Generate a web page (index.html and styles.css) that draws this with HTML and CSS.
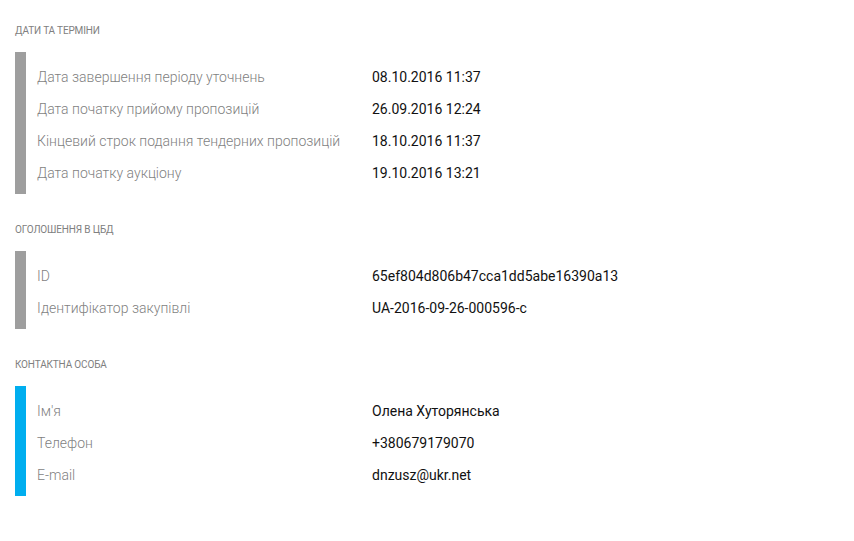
FILE: index.html
```html
<!DOCTYPE html>
<html lang="uk">
<head>
<meta charset="utf-8">
<link rel="stylesheet" href="styles.css">
</head>
<body>
<div class="page">
  <section class="block">
    <h3 class="title">Дати та терміни</h3>
    <div class="card">
      <div class="row"><span class="label">Дата завершення періоду уточнень</span><span class="value">08.10.2016 11:37</span></div>
      <div class="row"><span class="label">Дата початку прийому пропозицій</span><span class="value">26.09.2016 12:24</span></div>
      <div class="row"><span class="label">Кінцевий строк подання тендерних пропозицій</span><span class="value">18.10.2016 11:37</span></div>
      <div class="row"><span class="label">Дата початку аукціону</span><span class="value">19.10.2016 13:21</span></div>
    </div>
  </section>
  <section class="block">
    <h3 class="title">Оголошення в ЦБД</h3>
    <div class="card">
      <div class="row"><span class="label">ID</span><span class="value">65ef804d806b47cca1dd5abe16390a13</span></div>
      <div class="row"><span class="label">Ідентифікатор закупівлі</span><span class="value">UA-2016-09-26-000596-c</span></div>
    </div>
  </section>
  <section class="block">
    <h3 class="title">Контактна особа</h3>
    <div class="card card-blue">
      <div class="row"><span class="label">Ім'я</span><span class="value">Олена Хуторянська</span></div>
      <div class="row"><span class="label">Телефон</span><span class="value">+380679179070</span></div>
      <div class="row"><span class="label">E-mail</span><span class="value">dnzusz@ukr.net</span></div>
    </div>
  </section>
</div>
</body>
</html>
```
FILE: styles.css
```css
html, body {
  margin: 0;
  padding: 0;
  background: #fff;
}
body {
  font-family: Roboto, "Noto Sans", sans-serif;
}
.page {
  padding: 25px 15px 0 15px;
  display: flex;
  flex-direction: column;
  gap: 30px;
}
.title {
  margin: 0 0 15px 0;
  font-size: 10px;
  line-height: 12px;
  font-weight: 400;
  text-transform: uppercase;
  letter-spacing: -0.15px;
  color: #808080;
}
.card {
  border-left: 11px solid #9e9e9e;
  padding: 9px 0 5px 11px;
}
.card-blue {
  border-left-color: #00aeef;
}
.row {
  display: grid;
  grid-template-columns: 335px 1fr;
  height: 32px;
  align-items: center;
  font-size: 14px;
}
.label {
  color: #7f7f7f;
  font-weight: 300;
}
.value {
  color: #111;
}
```
